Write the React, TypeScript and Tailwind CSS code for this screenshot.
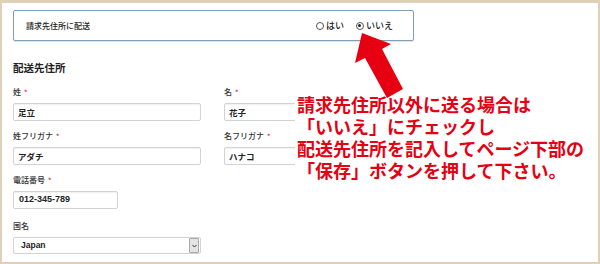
import React from 'react';

const font = { fontFamily: '"Noto Sans CJK JP", "Noto Sans", sans-serif' };

const Label: React.FC<{ text: string; required?: boolean }> = ({ text, required }) => (
  <div className="h-[12px] flex items-center text-[8px] leading-[12px] font-medium text-[#333]">
    <span>{text}</span>
    {required && <span className="ml-[3px] text-[#e8101f] text-[7px]">*</span>}
  </div>
);

const TextBox: React.FC<{ value: string; width?: string; mono?: boolean }> = ({ value, width = 'w-[188px]', mono }) => (
  <div
    className={`${width} h-[18px] mt-[5px] flex items-center border border-[#d3d3d3] rounded-[2px] bg-white shadow-[inset_0_1px_1px_rgba(0,0,0,0.06)] text-[#222] ${mono ? 'pl-[5px] text-[9px] font-bold' : 'pl-[4px] text-[8.5px] font-semibold'}`}
    style={mono ? { fontFamily: '"Liberation Sans", Arial, sans-serif' } : undefined}
  >
    {value}
  </div>
);

const Radio: React.FC<{ checked?: boolean; label: string }> = ({ checked, label }) => (
  <div className="flex items-center gap-[2px]">
    <span className="w-[8px] h-[8px] rounded-full border border-[#555] bg-white flex items-center justify-center">
      {checked && <span className="w-[3px] h-[3px] rounded-full bg-[#222]" />}
    </span>
    <span className="text-[9px] font-medium text-[#222]">{label}</span>
  </div>
);

export default function App() {
  return (
    <div className="w-[600px] h-[264px] bg-white" style={font}>
      <div className="relative w-[600px] h-[264px] border-x-2 border-t-[3px] border-b-2 border-[#dfd0b8] pl-[11px] pt-[7px]">
        {/* 請求先住所に配送 */}
        <div className="w-[401px] h-[31px] flex items-center justify-between border border-[#7f9fb8] rounded-[2px] shadow-[0_1px_1px_rgba(0,0,0,0.12)] pl-[12px] pr-[20px]">
          <span className="text-[8px] text-[#222] font-medium">請求先住所に配送</span>
          <div className="flex items-center gap-[12px]">
            <Radio label="はい" />
            <Radio checked label="いいえ" />
          </div>
        </div>

        <h2 className="mt-[20px] h-[14px] leading-[14px] text-[10.5px] font-bold text-[#222]">配送先住所</h2>

        <div className="mt-[11px] grid grid-cols-[188px_188px] gap-x-[23px]">
          <div>
            <Label text="姓" required />
            <TextBox value="足立" />
          </div>
          <div>
            <Label text="名" required />
            <TextBox value="花子" />
          </div>
          <div className="mt-[9px]">
            <Label text="姓フリガナ" required />
            <TextBox value="アダチ" />
          </div>
          <div className="mt-[9px]">
            <Label text="名フリガナ" required />
            <TextBox value="ハナコ" />
          </div>
        </div>

        <div className="mt-[9px]">
          <Label text="電話番号" required />
          <TextBox value="012-345-789" width="w-[105px]" mono />
        </div>

        <div className="mt-[11px]">
          <Label text="国名" />
          <div className="w-[188px] h-[17px] mt-[5px] flex items-center border border-[#d3d3d3] rounded-[2px] bg-white">
            <span
              className="flex-1 pl-[7px] text-[8.5px] font-bold text-[#222]"
              style={{ fontFamily: '"Liberation Sans", Arial, sans-serif' }}
            >
              Japan
            </span>
            <span className="w-[10px] h-[15px] mr-[1px] flex items-center justify-center border border-[#a9a9a9] bg-[#e4e4e4] rounded-[1px]">
              <svg width="5" height="4" viewBox="0 0 5 4">
                <path d="M0.5 1 L2.5 3 L4.5 1" fill="none" stroke="#333" strokeWidth="1" />
              </svg>
            </span>
          </div>
        </div>

        {/* 注釈 */}
        <div className="absolute left-[293px] top-[90px] bg-white pl-[2px] pr-[6px] text-[18px] leading-[22px] font-bold text-[#e60012]">
          <p>請求先住所以外に送る場合は</p>
          <p>「いいえ」にチェックし</p>
          <p>配送先住所を記入してページ下部の</p>
          <p>「保存」ボタンを押して下さい。</p>
        </div>

        <svg className="absolute left-[-2px] top-[-3px] pointer-events-none" width="600" height="264" viewBox="0 0 600 264">
          <polygon
            points="362,33 391,44 382,49 403,89 387,98 365,58 355,63"
            fill="#e60012"
          />
        </svg>
      </div>
    </div>
  );
}
